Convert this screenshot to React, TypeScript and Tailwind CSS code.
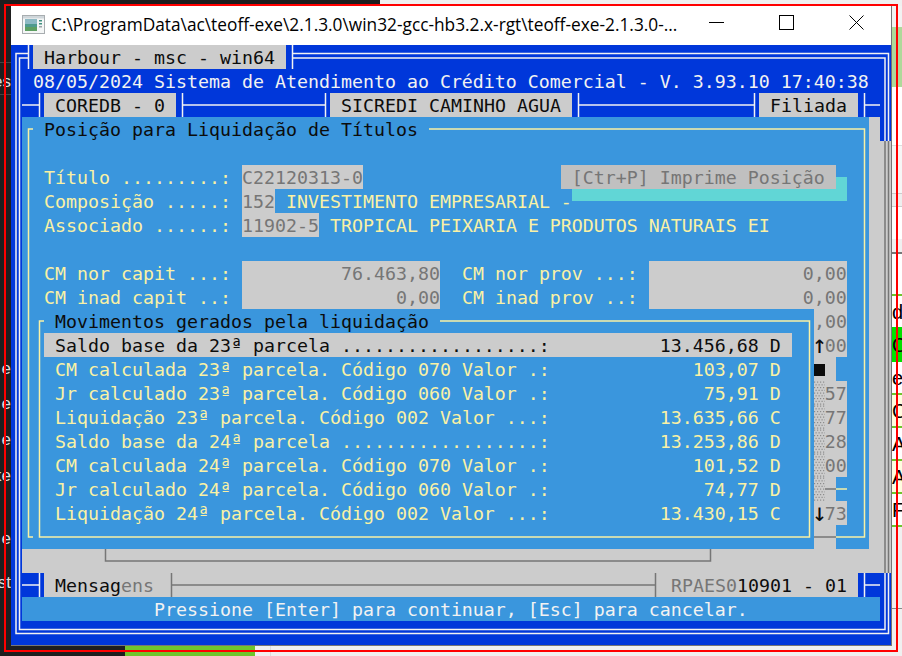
import React from "react";

const BLUE = "bg-[#0037da]";
const LIGHT = "bg-[#3a96dd]";
const GREY = "bg-[#cccccc]";
const WHITE_LINE = "#f2f2f2";
const YELLOW_LINE = "#f9f1a5";
const DARK_LINE = "#767676";

type TextProps = { children: React.ReactNode; className: string };
const T = ({ children, className }: TextProps) => (
  <span className={`block h-6 shrink-0 whitespace-pre leading-[26px] ${className}`}>{children}</span>
);

const Y = ({ children }: { children: React.ReactNode }) => <T className="bg-[#3a96dd] text-[#f9f1a5]">{children}</T>;
const KL = ({ children }: { children: React.ReactNode }) => <T className="bg-[#3a96dd] text-[#0c0c0c]">{children}</T>;
const GG = ({ children }: { children: React.ReactNode }) => <T className="bg-[#cccccc] text-[#767676]">{children}</T>;
const KG = ({ children }: { children: React.ReactNode }) => <T className="bg-[#cccccc] text-[#0c0c0c]">{children}</T>;

const Arrow = ({ children }: { children: React.ReactNode }) => (
  <span className="flex h-6 w-[11px] shrink-0 justify-center whitespace-pre bg-[#cccccc] text-[25px] leading-[24px] text-[#0c0c0c]">
    {children}
  </span>
);

const Ln = ({ n = 1, bg, stroke, d }: { n?: number; bg: string; stroke: string; d: string }) => (
  <svg width={n * 11} height={24} className={`block shrink-0 ${bg}`}>
    <path d={d} fill="none" stroke={stroke} strokeWidth={1.5} />
  </svg>
);

const V = "M6.5 0V24";
const DBL = "M5 0V24M8.5 0V24";
const EdgeBlue = () => <Ln bg={BLUE} stroke={WHITE_LINE} d={DBL} />;
const EdgeGrey = () => <Ln bg={GREY} stroke={DARK_LINE} d={DBL} />;
const YV = () => <Ln bg={LIGHT} stroke={YELLOW_LINE} d={V} />;

const Row = ({ children }: { children: React.ReactNode }) => <div className="flex h-6">{children}</div>;

const Inner = ({ children }: { children: React.ReactNode }) => (
  <Row>
    <EdgeBlue />
    <YV />
    {children}
    <YV />
    <GG> </GG>
    <EdgeGrey />
  </Row>
);

const Stipple = () => {
  const dots: React.ReactNode[] = [];
  for (let r = 0; r < 9; r++) {
    for (let c = 0; c < 4; c++) {
      dots.push(<rect key={`${r}-${c}`} x={c * 3 + (r % 2) * 1.5} y={r * 2.75 + 0.5} width={1.2} height={1.2} fill="#8c8c8c" />);
    }
  }
  return (
    <svg width={11} height={24} className="block shrink-0 bg-[#cccccc]">
      {dots}
    </svg>
  );
};

const Half = ({ n, top }: { n: number; top?: boolean }) => (
  <svg width={n * 11} height={24} className="block shrink-0 bg-[#3a96dd]">
    <rect x={0} y={top ? 0 : 12} width={n * 11} height={12} fill="#61d6d6" />
  </svg>
);

const Square = () => (
  <svg width={11} height={24} className="block shrink-0 bg-[#cccccc]">
    <rect x={0} y={7} width={11} height={12} fill="#0c0c0c" />
  </svg>
);

const movRow = (label: string, value: string, d: string) => ` ${label}${value.padStart(19)} ${d} `;

const Mov = ({ label, value, d, right }: { label: string; value: string; d: string; right: React.ReactNode }) => (
  <Inner>
    <YV />
    <Y>{movRow(label, value, d) + " "}</Y>
    <YV />
    {right}
  </Inner>
);

const Gn = ({ t }: { t: string }) => (
  <>
    <Stipple />
    <GG>{t}</GG>
    <Y> </Y>
  </>
);

const Console = () => (
  <div className={`w-[880px] ${BLUE} font-['DejaVu_Sans_Mono',monospace] text-[18.27px]`}>
    <Row>
      <Ln bg={BLUE} stroke={WHITE_LINE} d="M5 24V8.5H11M8.5 24V13H11" />
      <Ln bg={BLUE} stroke={WHITE_LINE} d="M0 8.5H6.5M0 13H6.5M6.5 0V24" />
      <KG>{" Harbour - msc - win64 "}</KG>
      <Ln n={54} bg={BLUE} stroke={WHITE_LINE} d="M6.5 0V24M6.5 8.5H594M6.5 13H594" />
      <Ln bg={BLUE} stroke={WHITE_LINE} d="M0 8.5H8.5V24M0 13H5V24" />
    </Row>
    <Row>
      <EdgeBlue />
      <T className="bg-[#0037da] text-[#f2f2f2]">{" 08/05/2024 Sistema de Atendimento ao Crédito Comercial - V. 3.93.10 17:40:38 "}</T>
      <EdgeBlue />
    </Row>
    <Row>
      <EdgeBlue />
      <Ln n={2} bg={BLUE} stroke={WHITE_LINE} d="M0 12H17.5M17.5 0V24" />
      <KG>{" COREDB - 0 "}</KG>
      <Ln n={14} bg={BLUE} stroke={WHITE_LINE} d="M6.5 0V24M6.5 12H149.5M149.5 0V24" />
      <KG>{" SICREDI CAMINHO AGUA "}</KG>
      <Ln n={17} bg={BLUE} stroke={WHITE_LINE} d="M6.5 0V24M6.5 12H182.5M182.5 0V24" />
      <KG>{" Filiada "}</KG>
      <Ln n={2} bg={BLUE} stroke={WHITE_LINE} d="M6.5 0V24M6.5 12H22" />
      <EdgeBlue />
    </Row>
    <Row>
      <EdgeBlue />
      <Ln bg={LIGHT} stroke={YELLOW_LINE} d="M6.5 24V12H11" />
      <KL>{" Posição para Liquidação de Títulos "}</KL>
      <Ln n={40} bg={LIGHT} stroke={YELLOW_LINE} d="M0 12H435.5V24" />
      <GG> </GG>
      <EdgeBlue />
    </Row>
    <Inner>
      <Y>{" ".repeat(75)}</Y>
    </Inner>
    <Inner>
      <Y>{" Título .........: "}</Y>
      <GG>C22120313-0</GG>
      <Y>{" ".repeat(18)}</Y>
      <T className="bg-[#c0c0c0] text-[#767676]">{" [Ctr+P] Imprime Posição "}</T>
      <Half n={1} />
      <Y> </Y>
    </Inner>
    <Inner>
      <Y>{" Composição .....: "}</Y>
      <GG>152</GG>
      <Y>{" INVESTIMENTO EMPRESARIAL -"}</Y>
      <Half n={25} top />
      <Y> </Y>
    </Inner>
    <Inner>
      <Y>{" Associado ......: "}</Y>
      <GG>11902-5</GG>
      <Y>{" TROPICAL PEIXARIA E PRODUTOS NATURAIS EI        "}</Y>
    </Inner>
    <Inner>
      <Y>{" ".repeat(75)}</Y>
    </Inner>
    <Inner>
      <Y>{" CM nor capit ...: "}</Y>
      <GG>{"76.463,80".padStart(18)}</GG>
      <Y>{"  CM nor prov ...: "}</Y>
      <GG>{"0,00".padStart(18)}</GG>
      <Y> </Y>
    </Inner>
    <Inner>
      <Y>{" CM inad capit ..: "}</Y>
      <GG>{"0,00".padStart(18)}</GG>
      <Y>{"  CM inad prov ..: "}</Y>
      <GG>{"0,00".padStart(18)}</GG>
      <Y> </Y>
    </Inner>
    <Inner>
      <Ln bg={LIGHT} stroke={YELLOW_LINE} d="M6.5 24V12H11" />
      <KL>{" Movimentos gerados pela liquidação "}</KL>
      <Ln n={34} bg={LIGHT} stroke={YELLOW_LINE} d="M0 12H369.5V24" />
      <GG>,00</GG>
      <Y> </Y>
    </Inner>
    <Inner>
      <YV />
      <KG>{movRow("Saldo base da 23ª parcela ..................:", "13.456,68", "D")}</KG>
      <Y> </Y>
      <YV />
      <Arrow>↑</Arrow>
      <GG>00</GG>
      <Y> </Y>
    </Inner>
    <Mov
      label="CM calculada 23ª parcela. Código 070 Valor .:"
      value="103,07"
      d="D"
      right={
        <>
          <Square />
          <GG> </GG>
          <Y>{"  "}</Y>
        </>
      }
    />
    <Mov label="Jr calculado 23ª parcela. Código 060 Valor .:" value="75,91" d="D" right={<Gn t="57" />} />
    <Mov label="Liquidação 23ª parcela. Código 002 Valor ...:" value="13.635,66" d="C" right={<Gn t="77" />} />
    <Mov label="Saldo base da 24ª parcela ..................:" value="13.253,86" d="D" right={<Gn t="28" />} />
    <Mov label="CM calculada 24ª parcela. Código 070 Valor .:" value="101,52" d="D" right={<Gn t="00" />} />
    <Mov
      label="Jr calculado 24ª parcela. Código 060 Valor .:"
      value="74,77"
      d="D"
      right={
        <>
          <Stipple />
          <Ln bg={GREY} stroke={DARK_LINE} d="M0 12H11" />
          <Ln bg={LIGHT} stroke={YELLOW_LINE} d="M0 12H11" />
          <Y> </Y>
        </>
      }
    />
    <Mov
      label="Liquidação 24ª parcela. Código 002 Valor ...:"
      value="13.430,15"
      d="C"
      right={
        <>
          <Arrow>↓</Arrow>
          <GG>73</GG>
          <Y> </Y>
        </>
      }
    />
    <Row>
      <EdgeBlue />
      <Ln bg={LIGHT} stroke={YELLOW_LINE} d="M6.5 0V12H11" />
      <Ln n={71} bg={LIGHT} stroke={YELLOW_LINE} d="M6.5 0V12H776.5V0" />
      <Ln n={2} bg={GREY} stroke={DARK_LINE} d="M0 12H22" />
      <Ln n={3} bg={LIGHT} stroke={YELLOW_LINE} d="M0 12H28.5V0" />
      <GG> </GG>
      <EdgeGrey />
    </Row>
    <Row>
      <EdgeBlue />
      <GG>{" ".repeat(7)}</GG>
      <Ln n={56} bg={GREY} stroke={DARK_LINE} d="M6.5 0V12H611.5V0" />
      <GG>{" ".repeat(15)}</GG>
      <EdgeGrey />
    </Row>
    <Row>
      <EdgeBlue />
      <Ln n={2} bg={BLUE} stroke={WHITE_LINE} d="M0 12H17.5M17.5 0V24" />
      <KG>{" Mensag"}</KG>
      <GG>{"ens "}</GG>
      <Ln n={45} bg={GREY} stroke={DARK_LINE} d="M6.5 0V24M6.5 12H490.5M490.5 0V24" />
      <GG>{" RPAES0"}</GG>
      <KG>{"10901 - 01 "}</KG>
      <Ln n={2} bg={BLUE} stroke={WHITE_LINE} d="M6.5 0V24M6.5 12H22" />
      <EdgeBlue />
    </Row>
    <Row>
      <EdgeBlue />
      <T className="bg-[#3a96dd] text-[#f2f2f2]">
        {"            Pressione [Enter] para continuar, [Esc] para cancelar.            "}
      </T>
      <EdgeBlue />
    </Row>
    <Row>
      <Ln bg={BLUE} stroke={WHITE_LINE} d="M5 0V12.5H11M8.5 0V8.5H11" />
      <Ln n={78} bg={BLUE} stroke={WHITE_LINE} d="M0 8.5H858M0 12.5H858" />
      <Ln bg={BLUE} stroke={WHITE_LINE} d="M0 8.5H5V0M0 12.5H8.5V0" />
    </Row>
  </div>
);

const AppIcon = () => (
  <svg width={23} height={19} viewBox="0 0 23 19" className="block shrink-0">
    <rect x={0.5} y={0.5} width={22} height={18} fill="#f4f6f6" stroke="#a8adb0" />
    <rect x={1} y={1} width={21} height={2.5} fill="#cfd6da" />
    <rect x={3} y={4} width={12} height={12} fill="#4f9a8e" />
    <rect x={3} y={4} width={12} height={5} fill="#8db9c4" />
    <rect x={3} y={12} width={12} height={4} fill="#5d9f62" />
    <rect x={17} y={5} width={3} height={1.5} fill="#3f8f80" />
    <rect x={17} y={8} width={3} height={1.5} fill="#3f8f80" />
    <rect x={17} y={11} width={3} height={1.5} fill="#9aa3a8" />
  </svg>
);

const TitleBar = () => (
  <div className="flex h-[39px] w-[880px] items-center bg-white pl-[11px] font-['Open_Sans',sans-serif] text-[17.3px] text-black">
    <div className="-mt-[2px]">
      <AppIcon />
    </div>
    <span className="-mt-[1px] ml-[6px] flex-1 whitespace-nowrap">
      {"C:\\ProgramData\\ac\\teoff-exe\\2.1.3.0\\win32-gcc-hb3.2.x-rgt\\teoff-exe-2.1.3.0-..."}
    </span>
    <div className="flex h-full">
      <div className="flex w-[70px] items-start justify-center pt-[16px]">
        <svg width={15} height={1} className="block">
          <rect width={15} height={1} fill="#000" />
        </svg>
      </div>
      <div className="flex w-[70px] items-start justify-center pt-[9px]">
        <svg width={15} height={15} className="block">
          <rect x={0.5} y={0.5} width={14} height={14} fill="none" stroke="#000" />
        </svg>
      </div>
      <div className="flex w-[70px] items-start justify-center pt-[9px]">
        <svg width={15} height={15} className="block">
          <path d="M0.5 0.5L14.5 14.5M14.5 0.5L0.5 14.5" fill="none" stroke="#000" />
        </svg>
      </div>
    </div>
  </div>
);

const LeftLetter = ({ t }: { t: string }) => (
  <div className="flex h-6 items-center justify-end whitespace-nowrap text-[17px] leading-6 text-[#dcdcdc]">{t}</div>
);

const LeftStrip = () => (
  <div className="flex w-[11px] shrink-0 flex-col overflow-hidden bg-[#1e1e1e] font-['Liberation_Sans',sans-serif]">
    <div className="h-[56px] shrink-0" />
    <div className="h-px shrink-0 bg-[#444444]" />
    <div className="h-[7px] shrink-0" />
    <LeftLetter t="es" />
    <div className="h-px shrink-0 bg-[#444444]" />
    <div className="h-[262px] shrink-0" />
    <LeftLetter t="e" />
    <div className="h-[11px] shrink-0" />
    <LeftLetter t="e" />
    <div className="h-[12px] shrink-0" />
    <LeftLetter t="e" />
    <div className="h-[12px] shrink-0" />
    <LeftLetter t="ke" />
    <div className="h-[39px] shrink-0" />
    <LeftLetter t="e" />
    <div className="h-[20px] shrink-0" />
    <LeftLetter t="st" />
  </div>
);

const GreenRule = () => <div className="h-[2px] shrink-0 bg-[#6fc52d]" />;

const RightCell = ({ t, className }: { t: string; className: string }) => (
  <div className={`flex h-[31px] shrink-0 items-center whitespace-nowrap text-[20px] leading-none text-black ${className}`}>{t}</div>
);

const RightStrip = () => (
  <div className="flex w-[10px] shrink-0 flex-col overflow-hidden bg-[#f0f0f0] font-['Liberation_Sans',sans-serif]">
    <div className="h-[21px] shrink-0 bg-[#f2f2f2]" />
    <div className="h-[60px] shrink-0 bg-[#aed99a]" />
    <div className="h-[58px] shrink-0 bg-white" />
    <div className="h-px shrink-0 bg-[#dddddd]" />
    <div className="h-[47px] shrink-0 bg-[#f6f6f6]" />
    <div className="h-px shrink-0 bg-[#cccccc]" />
    <div className="h-[12px] shrink-0 bg-[#eeeeee]" />
    <div className="h-px shrink-0 bg-[#cccccc]" />
    <div className="h-[32px] shrink-0 bg-white" />
    <div className="h-[13px] shrink-0 bg-[#f0f0f0]" />
    <div className="h-[2px] shrink-0 bg-[#777777]" />
    <div className="h-[40px] shrink-0 bg-white" />
    <GreenRule />
    <RightCell t="d" className="bg-white" />
    <div className="flex h-[35px] shrink-0 items-center bg-[#00e000] text-[20px] leading-none text-black">C</div>
    <RightCell t="er" className="bg-white text-[14px]" />
    <GreenRule />
    <RightCell t="C" className="bg-[#fffde0]" />
    <GreenRule />
    <RightCell t="A" className="bg-white" />
    <GreenRule />
    <RightCell t="A" className="bg-[#fffde0]" />
    <GreenRule />
    <RightCell t="F" className="bg-white" />
    <GreenRule />
    <div className="h-[81px] shrink-0" />
    <div className="h-px shrink-0 bg-[#888888]" />
  </div>
);

export default function App() {
  return (
    <div className="relative flex h-[656px] w-[902px] flex-col overflow-hidden bg-[#1e1e1e]">
      <div className="flex h-[6px] shrink-0">
        <div className="w-[380px] bg-[#1e1e1e]" />
        <div className="flex-1 bg-[#f0f0f0]" />
      </div>
      <div className="flex h-[640px] shrink-0">
        <LeftStrip />
        <div className="w-[881px] shrink-0 border-r border-b border-[#767676] bg-white">
          <TitleBar />
          <Console />
        </div>
        <RightStrip />
      </div>
      <div className="flex h-[10px] shrink-0">
        <div className="w-[125px] bg-[#1e1e1e]" />
        <div className="w-[130px] bg-[#6fc52d]" />
        <div className="w-[15px] bg-[#f0f0f0]" />
        <div className="w-px bg-[#dddddd]" />
        <div className="flex-1 bg-[#f0f0f0]" />
      </div>
      <div className="pointer-events-none absolute left-[4px] top-[4px] h-[648px] w-[894px] border-2 border-[#ff0000]" />
    </div>
  );
}
